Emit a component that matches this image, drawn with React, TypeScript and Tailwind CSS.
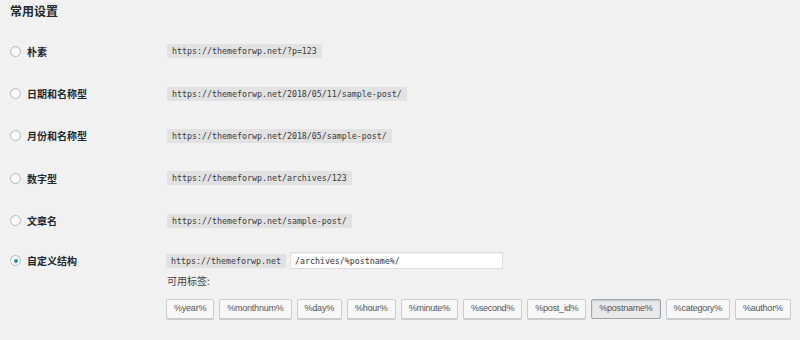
import React from "react";

const options = [
  { label: "朴素", code: "https://themeforwp.net/?p=123" },
  { label: "日期和名称型", code: "https://themeforwp.net/2018/05/11/sample-post/" },
  { label: "月份和名称型", code: "https://themeforwp.net/2018/05/sample-post/" },
  { label: "数字型", code: "https://themeforwp.net/archives/123" },
  { label: "文章名", code: "https://themeforwp.net/sample-post/" },
];

const tags = [
  "%year%",
  "%monthnum%",
  "%day%",
  "%hour%",
  "%minute%",
  "%second%",
  "%post_id%",
  "%postname%",
  "%category%",
  "%author%",
];

const cjk = { fontFamily: '"Noto Sans CJK SC", "Liberation Sans", sans-serif' };
const mono = { fontFamily: '"DejaVu Sans Mono", "Liberation Mono", monospace' };

function Radio({ checked }: { checked?: boolean }) {
  return (
    <span className="flex h-[11px] w-[11px] shrink-0 items-center justify-center rounded-full border border-[#b4b9be] bg-white shadow-[inset_0_1px_2px_rgba(0,0,0,0.07)]">
      {checked && <span className="h-[4px] w-[4px] rounded-full bg-[#1e8cbe]" />}
    </span>
  );
}

function Code({ children }: { children: React.ReactNode }) {
  return (
    <code
      className="bg-[#e2e2e2] px-[5px] py-[1px] text-[8.3px] leading-[12px] text-[#3a3a3a]"
      style={mono}
    >
      {children}
    </code>
  );
}

export default function App() {
  return (
    <div className="h-[340px] w-[800px] bg-[#f1f1f1] pl-[10px] pt-[3px] text-[#23282d]" style={cjk}>
      <h2 className="text-[12px] font-bold leading-[16px]">常用设置</h2>
      <div className="mt-[11px]">
        {options.map((o) => (
          <div key={o.label} className="flex h-[42.4px] items-center">
            <div className="flex w-[157px] items-center gap-[6px]">
              <Radio />
              <span className="text-[10px] font-bold">{o.label}</span>
            </div>
            <Code>{o.code}</Code>
          </div>
        ))}
        <div className="flex pt-[10px]">
          <div className="flex h-[18px] w-[156px] items-center gap-[6px]">
            <Radio checked />
            <span className="text-[10px] font-bold">自定义结构</span>
          </div>
          <div>
            <div className="flex h-[18px] items-center gap-[4px]">
              <Code>https://themeforwp.net</Code>
              <input
                readOnly
                value="/archives/%postname%/"
                className="h-[17px] w-[213px] border border-[#dddddd] bg-white px-[4px] text-[8.3px] text-[#32373c] shadow-[inset_0_1px_2px_rgba(0,0,0,0.07)] outline-none"
                style={mono}
              />
            </div>
            <div className="mt-[3px] pl-[1px] text-[10px] leading-[16px] text-[#444]">可用标签:</div>
            <div className="mt-[10px] flex gap-[5px]">
              {tags.map((t) => (
                <button
                  key={t}
                  className={
                    t === "%postname%"
                      ? "h-[20px] rounded-[2px] border border-[#a0a5aa] bg-[#e9e9e9] px-[7px] text-[9px] tracking-[-0.22px] text-[#555] shadow-[inset_0_1px_2px_rgba(0,0,0,0.15)]"
                      : "h-[20px] rounded-[2px] border border-[#cccccc] bg-[#f7f7f7] px-[7px] text-[9px] tracking-[-0.22px] text-[#555] shadow-[0_1px_0_#ccc]"
                  }
                  style={{ fontFamily: '"Liberation Sans", Arial, sans-serif' }}
                >
                  {t}
                </button>
              ))}
            </div>
          </div>
        </div>
      </div>
    </div>
  );
}
